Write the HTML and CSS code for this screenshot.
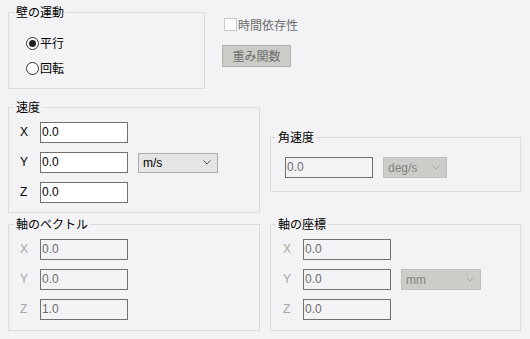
FILE: index.html
```html
<!DOCTYPE html>
<html lang="ja">
<head>
<meta charset="utf-8">
<link rel="stylesheet" href="styles.css">
</head>
<body>
<div class="page">
  <div class="row row-top">
    <fieldset class="grp motion">
      <legend>壁の運動</legend>
      <div class="radio-list">
        <div class="radio"><span class="rb on"></span><span>平行</span></div>
        <div class="radio"><span class="rb"></span><span>回転</span></div>
      </div>
    </fieldset>
    <div class="side">
      <div class="check"><span class="cb"></span><span class="dim">時間依存性</span></div>
      <div class="btn">重み関数</div>
    </div>
  </div>

  <div class="row row-mid">
    <fieldset class="grp vel">
      <legend>速度</legend>
      <div class="form">
        <span class="lbl">X</span><div class="field">0.0</div><span></span>
        <span class="lbl">Y</span><div class="field">0.0</div><div class="combo"><span>m/s</span><svg class="chev" width="8" height="5" viewBox="0 0 8 5"><path d="M0.5 0.5 L4 4 L7.5 0.5" fill="none" stroke="#555" stroke-width="1"/></svg></div>
        <span class="lbl">Z</span><div class="field">0.0</div><span></span>
      </div>
    </fieldset>
    <fieldset class="grp ang">
      <legend>角速度</legend>
      <div class="ang-row">
        <div class="field dis">0.0</div>
        <div class="combo dis narrow"><span>deg/s</span><svg class="chev" width="8" height="5" viewBox="0 0 8 5"><path d="M0.5 0.5 L4 4 L7.5 0.5" fill="none" stroke="#a9aaa7" stroke-width="1"/></svg></div>
      </div>
    </fieldset>
  </div>

  <div class="row row-bot">
    <fieldset class="grp vec">
      <legend>軸のベクトル</legend>
      <div class="form">
        <span class="lbl dis">X</span><div class="field dis">0.0</div><span></span>
        <span class="lbl dis">Y</span><div class="field dis">0.0</div><span></span>
        <span class="lbl dis">Z</span><div class="field dis">1.0</div><span></span>
      </div>
    </fieldset>
    <fieldset class="grp coord">
      <legend>軸の座標</legend>
      <div class="form">
        <span class="lbl dis">X</span><div class="field dis">0.0</div><span></span>
        <span class="lbl dis">Y</span><div class="field dis">0.0</div><div class="combo dis"><span>mm</span><svg class="chev" width="8" height="5" viewBox="0 0 8 5"><path d="M0.5 0.5 L4 4 L7.5 0.5" fill="none" stroke="#a9aaa7" stroke-width="1"/></svg></div>
        <span class="lbl dis">Z</span><div class="field dis">0.0</div><span></span>
      </div>
    </fieldset>
  </div>
</div>
</body>
</html>
```
FILE: styles.css
```css
html, body {
  margin: 0;
  padding: 0;
  background: #f3f2f5;
}
body {
  font-family: "Liberation Sans", "Noto Sans CJK JP", sans-serif;
  font-size: 12px;
  color: #000;
}
.page {
  padding: 4px 0 0 8px;
  width: 522px;
  box-sizing: border-box;
}
.row {
  display: flex;
  align-items: flex-start;
}
.row-mid { margin-top: 10px; }
.row-bot { margin-top: 3px; }

.grp {
  margin: 0;
  padding: 0;
  border: 1px solid #dcdcdc;
  min-width: 0;
  box-sizing: border-box;
}
.grp legend {
  font-family: "Noto Sans CJK JP", sans-serif;
  font-size: 12px;
  line-height: 16px;
  padding: 0 2px;
  margin-left: 5px;
  color: #000;
}

/* top */
.motion {
  width: 197px;
  height: 85px;
}
.radio-list {
  display: flex;
  flex-direction: column;
  gap: 9px;
  padding: 15px 0 0 17px;
}
.radio {
  display: flex;
  align-items: center;
  height: 16px;
  gap: 1px;
  font-family: "Noto Sans CJK JP", sans-serif;
  line-height: 16px;
}
.rb {
  width: 13px;
  height: 13px;
  box-sizing: border-box;
  border: 1px solid #333;
  border-radius: 50%;
  background: #fff;
  display: flex;
  align-items: center;
  justify-content: center;
}
.rb.on::after {
  content: "";
  width: 7px;
  height: 7px;
  border-radius: 50%;
  background: #222;
}
.side {
  margin-left: 17px;
  padding-top: 12px;
  display: flex;
  flex-direction: column;
  align-items: flex-start;
}
.check {
  display: flex;
  align-items: center;
  height: 17px;
  gap: 1px;
  font-family: "Noto Sans CJK JP", sans-serif;
  line-height: 17px;
}
.cb {
  width: 13px;
  height: 13px;
  box-sizing: border-box;
  border: 1px solid #c8cac6;
  background: #fcfcfc;
  margin-left: 2px;
}
.dim { color: #6d6d6d; }
.btn {
  margin-top: 12px;
  width: 69px;
  height: 22px;
  box-sizing: border-box;
  border: 1px solid #adb0ab;
  background: #cbccc8;
  color: #6d6d6d;
  font-family: "Noto Sans CJK JP", sans-serif;
  display: flex;
  align-items: center;
  justify-content: center;
  line-height: 20px;
}

/* forms */
.form {
  display: grid;
  grid-template-columns: 20px 88px auto;
  column-gap: 0;
  row-gap: 9px;
  align-items: center;
}
.lbl {
  font-size: 12px;
  line-height: 21px;
}
.lbl.dis { color: #a8a8a8; }
.field {
  width: 88px;
  height: 21px;
  box-sizing: border-box;
  border: 1px solid #707070;
  background: #fff;
  padding: 0 0 1px 1px;
  line-height: 18px;
  font-size: 12px;
}
.field.dis {
  background: #f3f2f5;
  color: #6d6d6d;
}
.combo {
  width: 80px;
  height: 20px;
  box-sizing: border-box;
  border: 1px solid #adadad;
  background: #e5e5e5;
  display: flex;
  align-items: center;
  justify-content: space-between;
  padding: 0 6px 0 4px;
  font-size: 12px;
  line-height: 18px;
}
.form .combo { margin-left: 10px; }
.combo.dis {
  background: #cccdc9;
  border-color: #bfc0bc;
  color: #838383;
  height: 21px;
}
.combo.narrow { width: 64px; }
.chev { display: block; }

.vel {
  width: 252px;
  height: 114px;
}
.vel .form { padding: 7px 0 0 11px; }

.ang {
  margin-left: 10px;
  margin-top: 30px;
  width: 251px;
  height: 63px;
}
.ang-row {
  display: flex;
  gap: 10px;
  padding: 12px 0 0 14px;
}

.vec {
  width: 252px;
  height: 115px;
}
.vec .form { padding: 7px 0 0 11px; }
.coord {
  margin-left: 10px;
  width: 251px;
  height: 115px;
}
.coord .form { padding: 7px 0 0 12px; }
```
